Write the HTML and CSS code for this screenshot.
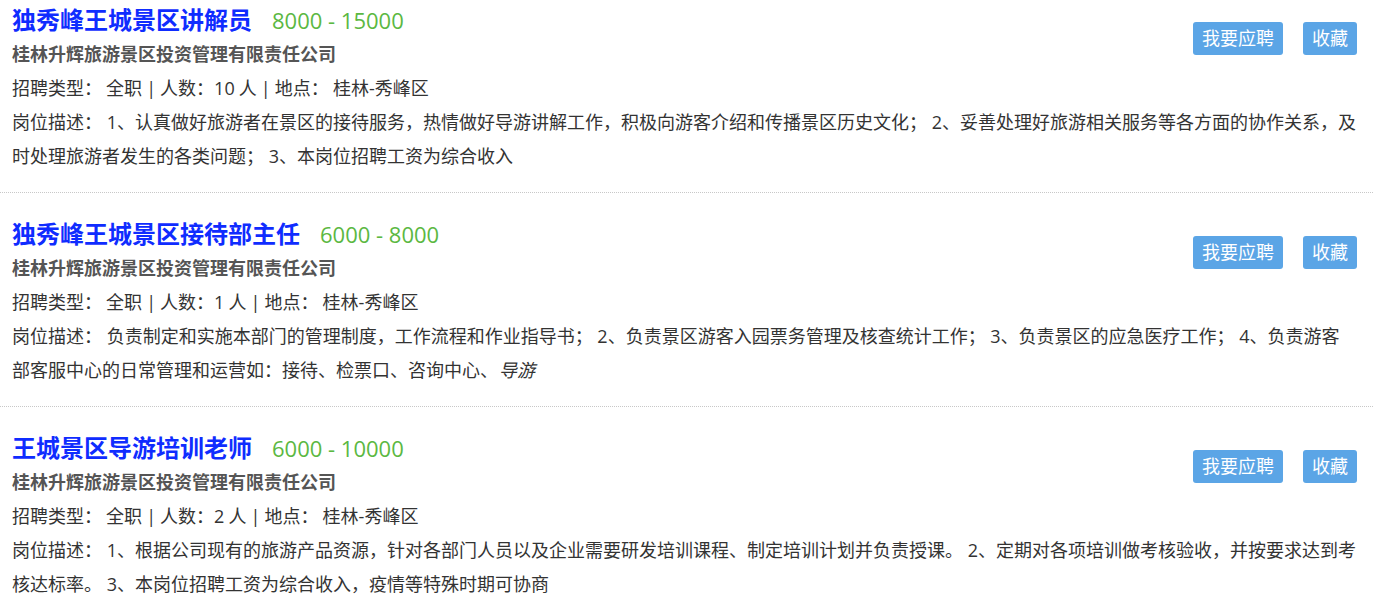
FILE: index.html
```html
<!DOCTYPE html>
<html lang="zh-CN">
<head>
<meta charset="utf-8">
<title>招聘职位</title>
<link rel="stylesheet" href="styles.css">
</head>
<body>
<div class="job-list">
  <div class="job">
    <div class="actions">
      <a class="btn btn-apply">我要应聘</a>
      <a class="btn btn-fav">收藏</a>
    </div>
    <div class="job-head">
      <span class="job-title">独秀峰王城景区讲解员</span>
      <span class="salary">8000 - 15000</span>
    </div>
    <div class="company">桂林升辉旅游景区投资管理有限责任公司</div>
    <div class="meta">招聘类型： 全职 | 人数：10 人 | 地点： 桂林-秀峰区</div>
    <div class="desc">岗位描述： 1、认真做好旅游者在景区的接待服务，热情做好导游讲解工作，积极向游客介绍和传播景区历史文化； 2、妥善处理好旅游相关服务等各方面的协作关系，及时处理旅游者发生的各类问题； 3、本岗位招聘工资为综合收入</div>
  </div>
  <div class="job">
    <div class="actions">
      <a class="btn btn-apply">我要应聘</a>
      <a class="btn btn-fav">收藏</a>
    </div>
    <div class="job-head">
      <span class="job-title">独秀峰王城景区接待部主任</span>
      <span class="salary">6000 - 8000</span>
    </div>
    <div class="company">桂林升辉旅游景区投资管理有限责任公司</div>
    <div class="meta">招聘类型： 全职 | 人数：1 人 | 地点： 桂林-秀峰区</div>
    <div class="desc">岗位描述： 负责制定和实施本部门的管理制度，工作流程和作业指导书； 2、负责景区游客入园票务管理及核查统计工作； 3、负责景区的应急医疗工作； 4、负责游客部客服中心的日常管理和运营如：接待、检票口、咨询中心、<i class="em">导游</i></div>
  </div>
  <div class="job">
    <div class="actions">
      <a class="btn btn-apply">我要应聘</a>
      <a class="btn btn-fav">收藏</a>
    </div>
    <div class="job-head">
      <span class="job-title">王城景区导游培训老师</span>
      <span class="salary">6000 - 10000</span>
    </div>
    <div class="company">桂林升辉旅游景区投资管理有限责任公司</div>
    <div class="meta">招聘类型： 全职 | 人数：2 人 | 地点： 桂林-秀峰区</div>
    <div class="desc">岗位描述： 1、根据公司现有的旅游产品资源，针对各部门人员以及企业需要研发培训课程、制定培训计划并负责授课。 2、定期对各项培训做考核验收，并按要求达到考核达标率。 3、本岗位招聘工资为综合收入，疫情等特殊时期可协商</div>
  </div>
</div>
</body>
</html>
```

FILE: styles.css
```css
html, body {
  margin: 0;
  padding: 0;
  background: #fff;
}

body {
  font-family: "Open Sans", "Noto Sans CJK SC", sans-serif;
  color: #333;
  font-size: 18px;
}

.job-list {
  width: 100%;
}

.job {
  padding: 24px 16px 19px 12px;
  border-bottom: 1px dotted #c8c8c8;
  line-height: 34px;
}

.job:first-child {
  padding-top: 3px;
}

.actions {
  float: right;
  display: flex;
  gap: 20px;
  margin-top: 19px;
}

.btn {
  display: block;
  height: 33px;
  line-height: 33px;
  padding: 0 9px;
  background: #5ba5e6;
  color: #fff;
  border-radius: 3px;
  font-size: 18px;
  cursor: pointer;
}

.job-head {
  display: flex;
  align-items: baseline;
  gap: 20px;
}

.job-title {
  font-size: 24px;
  font-weight: bold;
  color: #0f2cff;
}

.salary {
  font-size: 22px;
  color: #5bb842;
}

.company {
  font-weight: bold;
  color: #555;
}

.meta {
  word-spacing: -0.6px;
}

.em {
  font-style: italic;
  padding-left: 1px;
}
```
